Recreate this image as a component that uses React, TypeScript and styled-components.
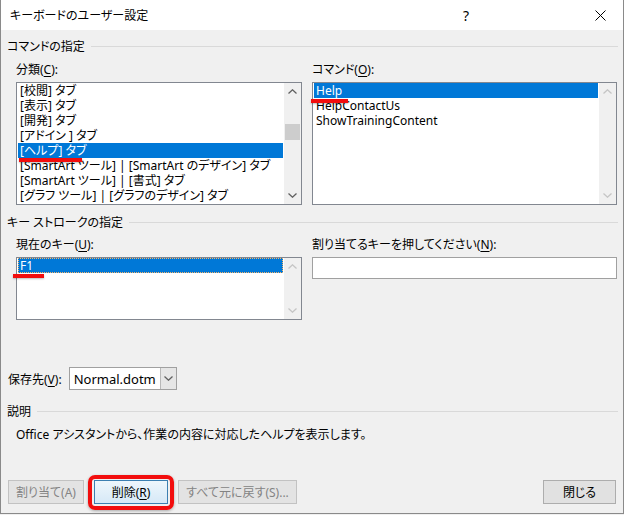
import React from "react";
import styled, { createGlobalStyle } from "styled-components";

const GlobalStyle = createGlobalStyle`
  html, body {
    margin: 0;
    padding: 0;
    background: #f0f0f0;
  }
  body {
    font-family: "Noto Sans", "Noto Sans CJK JP", sans-serif;
    font-size: 12px;
    color: #000;
    font-feature-settings: "palt";
  }
  * { box-sizing: border-box; }
`;

const Window = styled.div`
  width: 624px;
  height: 514px;
  display: flex;
  flex-direction: column;
  background: #f0f0f0;
  border: 1px solid #8a8a8a;
  border-top: none;
  overflow: hidden;
`;

const TitleBar = styled.div`
  height: 30px;
  flex: none;
  display: flex;
  align-items: center;
  background: #fff;
  padding-left: 9px;
`;

const TitleText = styled.div`
  flex: 1;
  font-size: 12px;
`;

const TitleButton = styled.div<{ $gap?: number }>`
  width: 46px;
  height: 30px;
  display: flex;
  align-items: center;
  justify-content: center;
  font-size: 14px;
  margin-right: ${(p) => p.$gap ?? 0}px;
`;

const Body = styled.div`
  flex: 1;
  display: flex;
  flex-direction: column;
  padding: 0 5px 0 6px;
`;

const SectionHeader = styled.div<{ $top: number }>`
  height: 16px;
  margin-top: ${(p) => p.$top}px;
  display: flex;
  align-items: center;
  gap: 6px;
  &::after {
    content: "";
    flex: 1;
    height: 1px;
    background: #d9d9d9;
  }
`;

const Columns = styled.div<{ $top: number }>`
  margin-top: ${(p) => p.$top}px;
  padding-left: 9px;
  display: grid;
  grid-template-columns: 286px 305px;
  column-gap: 10px;
  align-items: start;
`;

const Field = styled.div`
  display: flex;
  flex-direction: column;
  gap: 4px;
`;

const Label = styled.div`
  height: 16px;
  line-height: 16px;
  u { text-decoration: underline; text-underline-offset: 2px; }
`;

const ListBox = styled.div<{ $height: number }>`
  height: ${(p) => p.$height}px;
  border: 1px solid #828790;
  background: #fff;
  display: flex;
`;

const Items = styled.div`
  flex: 1;
  display: flex;
  flex-direction: column;
`;

const Item = styled.div<{ $selected?: boolean; $focus?: boolean }>`
  position: relative;
  height: 15px;
  line-height: 15px;
  margin: 0 1px;
  padding-left: 2px;
  white-space: nowrap;
  background: ${(p) => (p.$selected ? "#0078d7" : "transparent")};
  color: ${(p) => (p.$selected ? "#fff" : "#000")};
  outline: ${(p) => (p.$focus ? "1px dotted #f5b46a" : "none")};
  outline-offset: -1px;
`;

const RedMark = styled.span<{ $left: number; $top: number; $width: number }>`
  position: absolute;
  left: ${(p) => p.$left}px;
  top: ${(p) => p.$top}px;
  width: ${(p) => p.$width}px;
  height: 4px;
  background: #f20d0d;
  box-shadow: 0 1px 2px rgba(0, 0, 0, 0.25);
  z-index: 2;
`;

const ScrollBar = styled.div`
  width: 17px;
  flex: none;
  display: flex;
  flex-direction: column;
  background: #f0f0f0;
`;

const Arrow = styled.div`
  height: 17px;
  flex: none;
  display: flex;
  align-items: center;
  justify-content: center;
`;

const Track = styled.div`
  flex: 1;
`;

const Thumb = styled.div<{ $top: number }>`
  margin: ${(p) => p.$top}px 1px 0;
  height: 16px;
  background: #cdcdcd;
`;

const TextInput = styled.div`
  height: 22px;
  border: 1px solid #a0a0a0;
  background: #fff;
`;

const SaveRow = styled.div`
  margin-top: 47px;
  height: 23px;
  display: flex;
  align-items: center;
  gap: 7px;
  padding-left: 1px;
  u { text-decoration: underline; text-underline-offset: 2px; }
`;

const Select = styled.div`
  width: 108px;
  height: 23px;
  border: 1px solid #a0a0a0;
  background: #fff;
  display: flex;
  align-items: center;
  font-size: 13px;
  padding-left: 4px;
`;

const SelectValue = styled.div`
  flex: 1;
`;

const SelectButton = styled.div`
  width: 16px;
  height: 21px;
  border-left: 1px solid #b8b8b8;
  background: #e6e6e6;
  display: flex;
  align-items: center;
  justify-content: center;
`;

const Description = styled.div`
  margin-top: 8px;
  height: 16px;
  line-height: 16px;
  padding-left: 9px;
`;

const ButtonRow = styled.div`
  margin-top: 37px;
  display: flex;
  gap: 10px;
  padding-left: 1px;
  padding-right: 2px;
`;

const Button = styled.div<{ $width: number; $disabled?: boolean; $focused?: boolean; $push?: boolean }>`
  position: relative;
  width: ${(p) => p.$width}px;
  height: 24px;
  display: flex;
  align-items: center;
  justify-content: center;
  border: 1px solid ${(p) => (p.$focused ? "#3c7fb1" : p.$disabled ? "#c2c2c2" : "#adadad")};
  background: ${(p) =>
    p.$focused ? "linear-gradient(#eef6fc, #d6e9f7)" : p.$disabled ? "#e3e3e3" : "#e1e1e1"};
  color: ${(p) => (p.$disabled ? "#838383" : "#000")};
  margin-left: ${(p) => (p.$push ? "auto" : "0")};
  u { text-decoration: underline; text-underline-offset: 2px; }
`;

const RedFrame = styled.span`
  position: absolute;
  left: -7px;
  right: -7px;
  top: -6px;
  bottom: -7px;
  border: 4px solid #f20d0d;
  border-radius: 7px;
  box-shadow: 0 1px 3px rgba(0, 0, 0, 0.3);
`;

function Chevron({ up, color }: { up?: boolean; color: string }) {
  return (
    <svg width="9" height="5" viewBox="0 0 9 5">
      <path
        d={up ? "M0.5 4.5 L4.5 0.8 L8.5 4.5" : "M0.5 0.5 L4.5 4.2 L8.5 0.5"}
        fill="none"
        stroke={color}
        strokeWidth="1.3"
      />
    </svg>
  );
}

function Scroll({ disabled, thumb }: { disabled?: boolean; thumb?: number }) {
  const c = disabled ? "#c5c5c5" : "#606060";
  return (
    <ScrollBar>
      <Arrow>
        <Chevron up color={c} />
      </Arrow>
      <Track>{thumb !== undefined && <Thumb $top={thumb} />}</Track>
      <Arrow>
        <Chevron color={c} />
      </Arrow>
    </ScrollBar>
  );
}

const categories = [
  "[校閲] タブ",
  "[表示] タブ",
  "[開発] タブ",
  "[アドイン ] タブ",
  "[ヘルプ] タブ",
  "[SmartArt ツール] | [SmartArt のデザイン] タブ",
  "[SmartArt ツール] | [書式] タブ",
  "[グラフ ツール] | [グラフのデザイン] タブ",
];

const commands = ["Help", "HelpContactUs", "ShowTrainingContent"];

export default function App() {
  return (
    <>
      <GlobalStyle />
      <Window>
        <TitleBar>
          <TitleText>キーボードのユーザー設定</TitleText>
          <TitleButton $gap={88}>?</TitleButton>
          <TitleButton>
            <svg width="11" height="11" viewBox="0 0 11 11">
              <path d="M0.5 0.5 L10.5 10.5 M10.5 0.5 L0.5 10.5" stroke="#000" strokeWidth="1" />
            </svg>
          </TitleButton>
        </TitleBar>
        <Body>
          <SectionHeader $top={8}>コマンドの指定</SectionHeader>
          <Columns $top={8}>
            <Field>
              <Label>
                分類(<u>C</u>):
              </Label>
              <ListBox $height={123}>
                <Items>
                  {categories.map((c, i) => (
                    <Item key={c} $selected={i === 4}>
                      {c}
                      {i === 4 && <RedMark $left={1} $top={15} $width={63} />}
                    </Item>
                  ))}
                </Items>
                <Scroll thumb={24} />
              </ListBox>
            </Field>
            <Field>
              <Label>
                コマンド(<u>O</u>):
              </Label>
              <ListBox $height={123}>
                <Items>
                  {commands.map((c, i) => (
                    <Item key={c} $selected={i === 0}>
                      {c}
                      {i === 0 && <RedMark $left={-3} $top={16} $width={37} />}
                    </Item>
                  ))}
                </Items>
                <Scroll disabled />
              </ListBox>
            </Field>
          </Columns>

          <SectionHeader $top={9}>キー ストロークの指定</SectionHeader>
          <Columns $top={7}>
            <Field>
              <Label>
                現在のキー(<u>U</u>):
              </Label>
              <ListBox $height={63}>
                <Items>
                  <Item $selected $focus>
                    F1
                    <RedMark $left={-5} $top={16} $width={31} />
                  </Item>
                </Items>
                <Scroll disabled />
              </ListBox>
            </Field>
            <Field>
              <Label>
                割り当てるキーを押してください(<u>N</u>):
              </Label>
              <TextInput />
            </Field>
          </Columns>

          <SaveRow>
            <span>
              保存先(<u>V</u>):
            </span>
            <Select>
              <SelectValue>Normal.dotm</SelectValue>
              <SelectButton>
                <Chevron color="#606060" />
              </SelectButton>
            </Select>
          </SaveRow>

          <SectionHeader $top={13}>説明</SectionHeader>
          <Description>Office アシスタントから、作業の内容に対応したヘルプを表示します。</Description>

          <ButtonRow>
            <Button $width={76} $disabled>
              割り当て(A)
            </Button>
            <Button $width={74} $focused>
              削除(<u>R</u>)
              <RedFrame />
            </Button>
            <Button $width={119} $disabled>
              すべて元に戻す(S)...
            </Button>
            <Button $width={73} $push>
              閉じる
            </Button>
          </ButtonRow>
        </Body>
      </Window>
    </>
  );
}
